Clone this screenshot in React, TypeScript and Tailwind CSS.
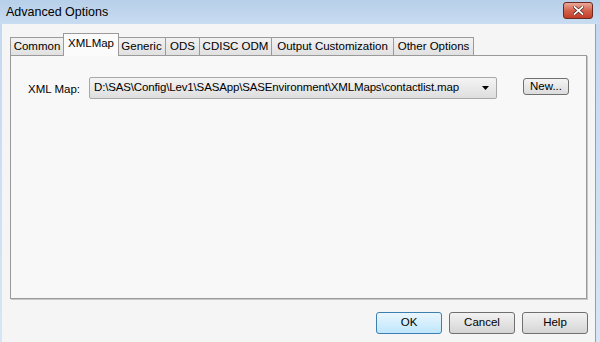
import React from 'react';

const tabs = [
  { label: 'Common', w: 'w-[54px]' },
  { label: 'XMLMap', w: 'w-[56px]', active: true },
  { label: 'Generic', w: 'w-[48px]' },
  { label: 'ODS', w: 'w-[34px]' },
  { label: 'CDISC ODM', w: 'w-[72px]' },
  { label: 'Output Customization', w: 'w-[122px]' },
  { label: 'Other Options', w: 'w-[80px]' },
];

function DialogButton({ label, primary }: { label: string; primary?: boolean }) {
  return (
    <button
      className={
        'w-[66px] h-[22px] rounded-[3px] border text-[11.5px] text-black flex items-center justify-center ' +
        (primary
          ? 'border-[#3c7fb1] bg-gradient-to-b from-[#eaf6fd] to-[#bee6fd]'
          : 'border-[#707070] bg-gradient-to-b from-[#f2f2f2] to-[#d5d5d5]')
      }
    >
      {label}
    </button>
  );
}

export default function App() {
  return (
    <div
      className="w-[600px] h-[342px] flex flex-col bg-gradient-to-b from-[#c2d8f0] to-[#d6e6f7] overflow-hidden"
      style={{ fontFamily: '"Liberation Sans", Arial, sans-serif' }}
    >
      {/* Title bar */}
      <div className="h-[24px] shrink-0 flex items-center justify-between pl-[6px] pr-[7px] bg-gradient-to-b from-[#b7cfe9] to-[#c9dcf1]">
        <span className="text-[12.5px] text-black">Advanced Options</span>
        <div className="w-[30px] h-[17px] mt-[-3px] rounded-[3px] border border-[#6b2a22] bg-gradient-to-b from-[#e9a99b] via-[#d4624c] to-[#c23c26] flex items-center justify-center">
          <svg width="11" height="9" viewBox="0 0 11 9">
            <path d="M1.5 1 L9.5 8 M9.5 1 L1.5 8" stroke="#3a1a14" strokeWidth="3" strokeLinecap="square" />
            <path d="M1.5 1 L9.5 8 M9.5 1 L1.5 8" stroke="#ffffff" strokeWidth="1.8" strokeLinecap="square" />
          </svg>
        </div>
      </div>

      {/* Body */}
      <div className="flex-1 flex flex-col ml-[2px] mr-[4px] bg-[#f5f5f5] border-r border-[#7aa6d3]">
        {/* Tabs */}
        <div className="flex items-end pl-[8px] pt-[8px] h-[31px] relative z-10">
          {tabs.map((t, i) =>
            t.active ? (
              <div
                key={t.label}
                className={`${t.w} h-[23px] -mb-px -ml-px -mr-px bg-[#fbfbfb] border border-b-0 border-[#9a9a9a] text-[11.5px] text-black flex items-center justify-center pb-[2px] relative`}
              >
                {t.label}
              </div>
            ) : (
              <div
                key={t.label}
                className={`${t.w} h-[18px] bg-gradient-to-b from-[#f2f2f2] to-[#e1e1e1] border-t border-r border-[#9a9a9a] ${
                  i === 0 ? 'border-l' : ''
                } text-[11.5px] text-black flex items-center justify-center`}
              >
                {t.label}
              </div>
            )
          )}
        </div>

        {/* Panel */}
        <div className="mx-[8px] h-[244px] bg-[#f8f8f8] border border-[#9a9a9a] shadow-[1px_1px_0_#c8c8c8] flex items-start pt-[21px] pl-[17px]">
          <span className="text-[11.5px] text-black mt-[4px] w-[61px]">XML Map:</span>
          <div className="w-[408px] h-[22px] rounded-[2px] border border-[#a8a8a8] bg-gradient-to-b from-[#f4f4f4] to-[#dedede] flex items-center pl-[4px] pr-[7px]">
            <span className="flex-1 text-[11.5px] text-black tracking-[-0.15px] whitespace-nowrap overflow-hidden">
              D:\SAS\Config\Lev1\SASApp\SASEnvironment\XMLMaps\contactlist.map
            </span>
            <svg width="7" height="4" viewBox="0 0 7 4">
              <path d="M0 0 H7 L3.5 4 Z" fill="#000" />
            </svg>
          </div>
          <button className="ml-[26px] mt-[1px] w-[46px] h-[17px] rounded-[3px] border border-[#707070] bg-gradient-to-b from-[#f4f4f4] to-[#dcdcdc] text-[11.5px] text-black flex items-center justify-center">
            New...
          </button>
        </div>

        {/* Buttons */}
        <div className="flex justify-end gap-[7px] pr-[7px] pt-[13px]">
          <DialogButton label="OK" primary />
          <DialogButton label="Cancel" />
          <DialogButton label="Help" />
        </div>
      </div>
    </div>
  );
}
